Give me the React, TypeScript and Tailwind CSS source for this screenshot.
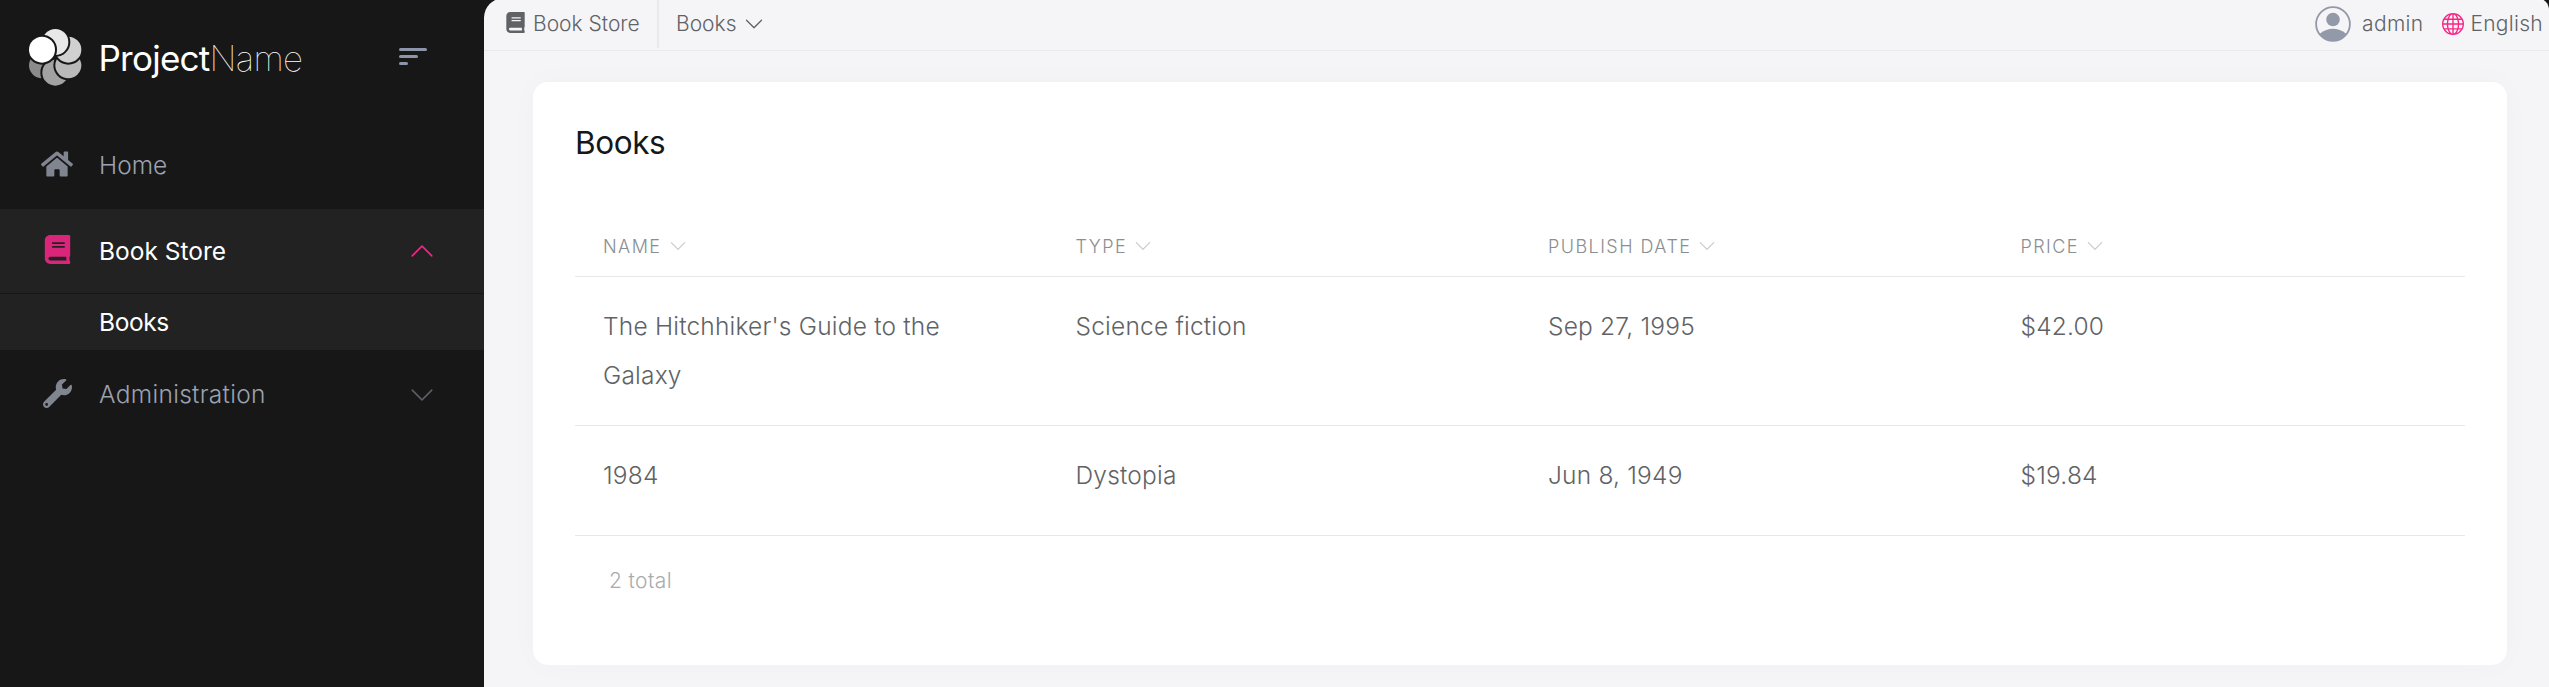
import type { ReactNode } from "react";
import { FaBook, FaHome, FaWrench } from "react-icons/fa";
import { BsChevronDown, BsChevronUp, BsGlobe } from "react-icons/bs";

const columns = ["Name", "Type", "Publish date", "Price"];
const books = [
  ["The Hitchhiker's Guide to the Galaxy", "Science fiction", "Sep 27, 1995", "$42.00"],
  ["1984", "Dystopia", "Jun 8, 1949", "$19.84"],
];

function Logo() {
  return (
    <svg className="h-[57px] w-[53px] shrink-0" viewBox="0 0 159 171">
      <g stroke="#171717" strokeWidth="12" style={{ paintOrder: "stroke" }}>
        <circle cx="39" cy="109" r="39" fill="#8b8b8b" />
        <circle cx="79" cy="131" r="39" fill="#a2a2a2" />
        <circle cx="118" cy="109" r="39" fill="#b9b9b9" />
        <circle cx="118" cy="62" r="39" fill="#d0d0d0" />
        <circle cx="79" cy="39" r="39" fill="#e8e8e8" />
        <circle cx="39" cy="62" r="39" fill="#ffffff" />
      </g>
    </svg>
  );
}

function UserIcon() {
  return (
    <svg className="size-9 shrink-0" viewBox="0 0 36 36">
      <circle cx="18" cy="18" r="16.9" fill="none" stroke="#9299a8" strokeWidth="1.8" />
      <circle cx="18" cy="13.5" r="6.8" fill="#9299a8" />
      <path d="M4.5 28C9 24 13.5 22.7 18 22.7S27 24 31.500 28A17 17 0 0 1 4.500 28Z" fill="#9299a8" />
    </svg>
  );
}

type ItemProps = { icon: ReactNode; label: string; chevron?: ReactNode; className: string };

function MenuItem({ icon, label, chevron, className }: ItemProps) {
  return (
    <div className={`flex items-center pr-[49px] pl-[37px] ${className}`}>
      <span className="mb-[3px] flex w-10 justify-center">{icon}</span>
      <span className="ml-[22px] flex-1">{label}</span>
      {chevron}
    </div>
  );
}

export default function App() {
  return (
    <div className="flex h-[687px] w-full overflow-hidden bg-[#171717] font-['Inter',sans-serif] font-[350]">
      <aside className="w-[484px] shrink-0 text-[24.500px] text-[#9ba2b1]">
        <div className="flex h-[122px] items-start pt-[29px] pl-[28.500px]">
          <Logo />
          <div className="mt-[4px] ml-[17px] w-[300px] text-[35px] leading-[50px] font-normal tracking-[-0.75px] text-white">
            Project<span className="font-thin">Name</span>
          </div>
          <div className="mt-[19px] flex flex-col gap-1">
            <span className="h-[3px] w-7 rounded-full bg-[#8d95aa]" />
            <span className="h-[3px] w-[19px] rounded-full bg-[#8d95aa]" />
            <span className="h-[3px] w-[9px] rounded-full bg-[#8d95aa]" />
          </div>
        </div>
        <nav>
          <MenuItem className="h-[87px]" icon={<FaHome className="size-8 text-[#808590]" />} label="Home" />
          <MenuItem
            className="h-[84px] bg-[#222222] font-normal text-white"
            icon={<FaBook className="size-[29px] text-[#da257a]" />}
            label="Book Store"
            chevron={<BsChevronUp className="size-[26px] text-[#f72585]" />}
          />
          <div className="mt-px h-[56px] bg-[#222222] pl-[99px] leading-[56px] font-normal tracking-[-0.4px] text-white">Books</div>
          <MenuItem
            className="h-[89px] tracking-[0.3px]"
            icon={<FaWrench className="size-[29px] text-[#808590]" />}
            label="Administration"
            chevron={<BsChevronDown className="size-[26px] text-[#5b5e64]" />}
          />
        </nav>
      </aside>

      <main className="-mt-0.5 flex h-[689px] flex-1 flex-col overflow-hidden rounded-tl-[20px] rounded-tr-[12px] bg-[#f5f5f8] text-[#5f6366]">
        <header className="flex h-[53px] shrink-0 items-center border-b border-[#e8e9ec] pr-[6px] pl-[21px] text-[21px]">
          <FaBook className="mt-[-4px] size-[21px]" />
          <span className="ml-[7px] w-[106px] whitespace-nowrap">Book Store</span>
          <span className="mr-[17px] ml-[18px] mb-0.5 h-[50px] w-0.5 bg-[#e8e9ec]" />
          <span>Books</span>
          <BsChevronDown className="ml-[8px] size-5" />
          <div className="ml-auto flex items-center">
            <UserIcon />
            <span className="ml-[11px] tracking-[0.3px]">admin</span>
            <BsGlobe className="ml-[19px] size-[22px] text-[#f72585]" />
            <span className="ml-[6px] tracking-[0.3px]">English</span>
          </div>
        </header>

        <section className="mt-[31px] mr-[42px] ml-[49px] h-[583px] rounded-[15px] bg-white px-[42px] pt-[36px] shadow-[0_0_30px_rgba(0,0,0,0.025)]">
          <h1 className="h-[76px] pt-px text-[31.500px] leading-[48px] font-normal tracking-[-0.4px] text-[#15171a]">Books</h1>
          <table className="mt-[23px] w-full table-fixed border-collapse">
            <thead>
              <tr className="border-b border-[#e7e8ea]">
                {columns.map((column) => (
                  <th key={column} className="h-[59px] px-[28px] text-left text-[18px] font-[350] tracking-[1.45px] text-[#8b8e90] uppercase">
                    <span className="flex items-center gap-[7px]">
                      {column}
                      <BsChevronDown className="size-[18px] text-[#c8cacc]" />
                    </span>
                  </th>
                ))}
              </tr>
            </thead>
            <tbody className="text-[24.500px] leading-[49px] tracking-[0.2px]">
              {books.map((book) => (
                <tr key={book[0]} className="border-b border-[#e7e8ea] last:h-[110px]">
                  {book.map((value) => (
                    <td key={value} className="px-[28px] pt-[25px] pb-[25px] align-top">
                      <span className="block max-w-[380px]">{value}</span>
                    </td>
                  ))}
                </tr>
              ))}
            </tbody>
          </table>
          <p className="mt-[30px] pl-[34px] text-[21px] leading-[30px] tracking-[0.4px] text-[#a8abad]">2 total</p>
        </section>
      </main>
    </div>
  );
}
